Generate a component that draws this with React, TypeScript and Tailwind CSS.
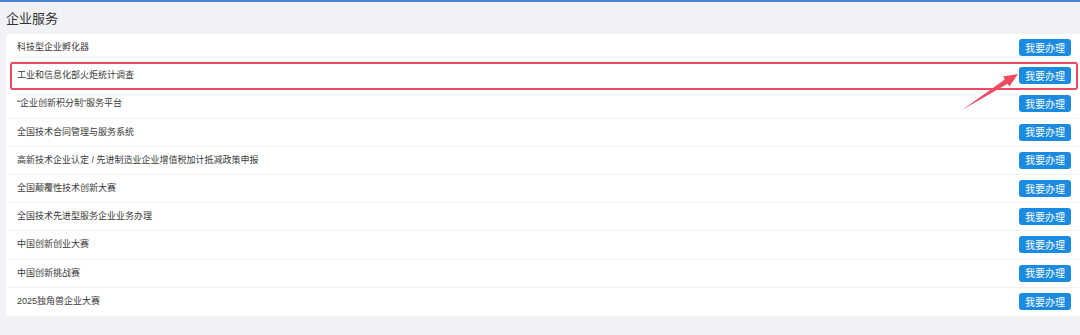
const services = [
  '科技型企业孵化器',
  '工业和信息化部火炬统计调查',
  '“企业创新积分制”服务平台',
  '全国技术合同管理与服务系统',
  '高新技术企业认定 / 先进制造业企业增值税加计抵减政策申报',
  '全国颠覆性技术创新大赛',
  '全国技术先进型服务企业业务办理',
  '中国创新创业大赛',
  '中国创新挑战赛',
  '2025独角兽企业大赛',
];

export default function App() {
  return (
    <div
      className="w-[1080px] h-[335px] bg-[#f0f2f5] border-t-2 border-[#4d82d9] overflow-hidden text-[#333]"
      style={{ fontFamily: '"Noto Sans CJK SC", "Noto Sans", sans-serif' }}
    >
      <h1 className="pl-[6px] h-[32px] flex items-center text-[13px] text-[#333]">企业服务</h1>
      <div className="relative ml-[6px] bg-white rounded-l-[4px] px-[2px]">
        {services.map((name, i) => (
          <div
            key={name}
            className={`h-[28.2px] flex items-center justify-between pl-[9px] pr-[7px] ${
              i < services.length - 1 ? 'border-b border-[#f0f0f0]' : ''
            }`}
          >
            <span
              className="text-[9px] leading-none text-[#3a3a3a]"
              style={{ fontFamily: '"Liberation Sans", "Noto Sans CJK SC", sans-serif' }}
            >
              {name}
            </span>
            <button className="w-[52px] h-[17px] rounded-[3px] bg-[#1a8be0] text-white text-[10px] leading-none">
              我要办理
            </button>
          </div>
        ))}

        {/* highlight annotation */}
        <div className="absolute left-[4px] top-[28px] w-[1068px] h-[28px] border-2 border-[#ee4a62] rounded-[3px] pointer-events-none" />
        <svg
          className="absolute left-[950px] top-[36px] pointer-events-none"
          width="70"
          height="44"
          viewBox="0 0 70 44"
        >
          <path d="M6 40 L48.8 9.5 L47 6.6 L62 4 L53.4 16.6 L51.6 13.7 Z" fill="#ee4a62" />
        </svg>
      </div>
    </div>
  );
}
